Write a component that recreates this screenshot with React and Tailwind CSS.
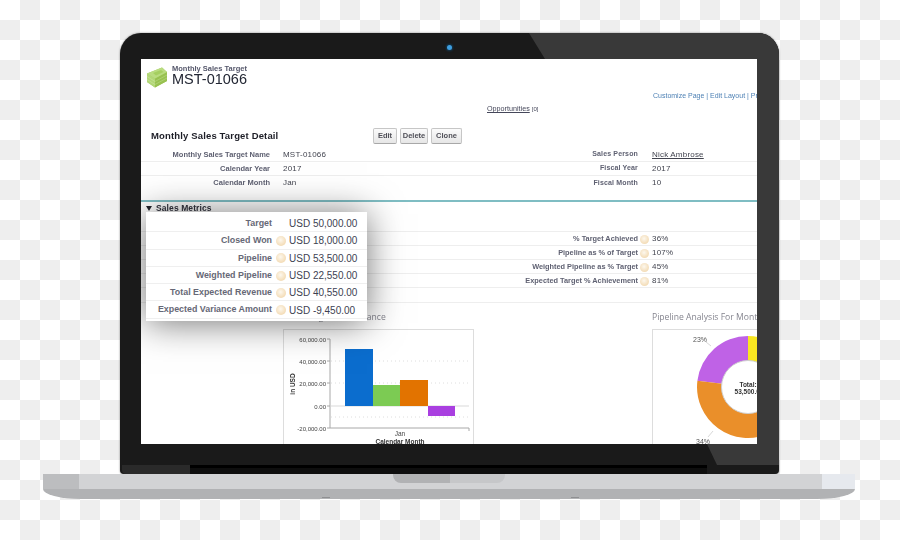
import React from 'react';

const detailRows = [
  ['Monthly Sales Target Name', 'MST-01066', 'Sales Person', 'Nick Ambrose'],
  ['Calendar Year', '2017', 'Fiscal Year', '2017'],
  ['Calendar Month', 'Jan', 'Fiscal Month', '10'],
];

const metricRows = [
  ['% Target Achieved', '36%'],
  ['Pipeline as % of Target', '107%'],
  ['Weighted Pipeline as % Target', '45%'],
  ['Expected Target % Achievement', '81%'],
  ['', ''],
];

const popoutRows = [
  ['Target', 'USD 50,000.00', false],
  ['Closed Won', 'USD 18,000.00', true],
  ['Pipeline', 'USD 53,500.00', true],
  ['Weighted Pipeline', 'USD 22,550.00', true],
  ['Total Expected Revenue', 'USD 40,550.00', true],
  ['Expected Variance Amount', 'USD -9,450.00', true],
];

export default function App() {
  return (
    <div className="w-[900px] h-[540px] overflow-hidden flex flex-col pt-[33px] font-['Liberation_Sans',Arial,sans-serif] bg-[repeating-conic-gradient(#eeeeee_0_25%,#ffffff_0_50%)] bg-[length:40px_40px]">
      <Lid />
      <Base />
    </div>
  );
}

function Lid() {
  return (
    <div className="relative shrink-0 ml-[120px] w-[659px] h-[441px] rounded-t-[21px] rounded-b-[4px] bg-[#1a1a1a] pt-[26px] pl-[21px] shadow-[0_0_2px_rgba(0,0,0,0.5)]">
      {/* lighter reflection over the right side of the bezel */}
      <div className="absolute inset-0 rounded-t-[21px] bg-[#393939] [clip-path:polygon(409px_0,100%_0,100%_432px,597px_432px,587px_411px,425px_26px)]" />
      <div className="absolute left-[2px] bottom-0 w-[68px] h-[9px] rounded-bl-[4px] bg-[#2a2a2a]" />
      <div className="absolute left-[70px] bottom-0 w-[517px] h-[9px] bg-[#0e0e0e] border-t-[3px] border-black" />
      <div className="absolute left-[327px] top-[12px] w-[5px] h-[5px] rounded-full bg-[#3f9fe0] shadow-[0_0_2px_1px_#123a55]" />
      <Screen />
    </div>
  );
}

function Screen() {
  return (
    <div className="relative w-[616px] h-[385px] overflow-hidden bg-white">
      <div className="blur-[0.35px]">
        <div className="h-[30px] flex pt-[6px] pl-[5px]">
          <MoneyIcon />
          <div className="ml-[4px] -mt-[1px]">
            <div className="text-[7.5px] leading-[9px] font-bold text-[#54566a]">Monthly Sales Target</div>
            <div className="text-[14.5px] leading-[13px] text-[#222633]">MST-01066</div>
          </div>
        </div>
        <div className="h-[12px] pl-[512px] text-[7px] leading-[14px] text-[#4f82b5] whitespace-nowrap">
          Customize Page | Edit Layout | Printable View
        </div>
        <div className="h-[13px] pl-[346px] text-[7.2px] leading-[15px] text-[#45475a] whitespace-nowrap">
          <span className="underline">Opportunities</span> <span className="text-[6px]">[0]</span>
        </div>
        <div className="mt-[14px] h-[16px] flex items-center pl-[10px]">
          <div className="w-[222px] text-[9.5px] font-bold tracking-[0.15px] text-[#1c1d26]">Monthly Sales Target Detail</div>
          <div className="flex gap-[3px]">
            <DetailButton className="w-[24px]">Edit</DetailButton>
            <DetailButton className="w-[28px]">Delete</DetailButton>
            <DetailButton className="w-[31px]">Clone</DetailButton>
          </div>
        </div>
        <div className="mt-[4px]">
          {detailRows.map((row, i) => (
            <div key={row[0]} className={`h-[14px] flex items-center ${i < 2 ? 'border-b border-[#eeeeee]' : ''}`}>
              <div className="w-[129px] text-right text-[7.5px] font-bold text-[#5f6172] whitespace-nowrap">{row[0]}</div>
              <div className="w-[239px] pl-[13px] text-[8px] tracking-[0.2px] text-[#42444f]">{row[1]}</div>
              <div className="w-[129px] text-right text-[7px] font-bold tracking-[0.15px] text-[#5f6172]">{row[2]}</div>
              <div className={`pl-[14px] text-[8px] tracking-[0.2px] text-[#42444f] ${i === 0 ? 'underline' : ''}`}>{row[3]}</div>
            </div>
          ))}
        </div>
        <div className="mt-[10px] h-[1.5px] bg-[#7fbdc3]" />
        <div className="h-[14px] flex items-center pl-[5px] text-[8.5px] font-bold tracking-[0.1px] text-[#33343f]">
          <span className="w-0 h-0 mr-[4px] border-x-[3.5px] border-x-transparent border-t-[5px] border-t-[#22232b]" />
          Sales Metrics
        </div>
        <div className="h-[16.5px] border-b border-[#eeeeee]" />
        {metricRows.map((row, i) => (
          <div key={i} className={`flex items-center justify-end pt-[1px] pr-[108px] border-b border-[#eeeeee] relative ${i === 4 ? 'h-[15px]' : 'h-[14px]'}`}>
            {row[0] && (
              <>
                <span className="text-[7.35px] font-bold text-[#5f6172] whitespace-nowrap">{row[0]}</span>
                <HelpDot className="w-[9px] h-[9px] ml-[2px]" />
                <span className="absolute left-[511px] text-[8px] tracking-[0.2px] text-[#42444f]">{row[1]}</span>
              </>
            )}
          </div>
        ))}
        <div className="mt-[8px] flex pl-[142px]">
          <SpendChart />
          <div className="ml-[178px]">
            <PipelineChart />
          </div>
        </div>
      </div>
      <Popout />
    </div>
  );
}

function DetailButton({ className, children }) {
  return (
    <div className={`h-[16px] flex items-center justify-center rounded-[2px] border border-[#c6c6c6] border-b-[#a8a8a8] bg-gradient-to-b from-[#fbfbfb] to-[#e6e6e6] text-[7.5px] font-bold text-[#4f4f57] ${className}`}>
      {children}
    </div>
  );
}

function HelpDot({ className }) {
  return (
    <span className={`inline-block shrink-0 rounded-full bg-[radial-gradient(circle_at_45%_40%,#fdf8ee,#efd09f)] ${className}`} />
  );
}

function Popout() {
  return (
    <div className="absolute left-[5px] top-[153px] w-[221px] h-[109px] pt-[3px] bg-white shadow-[0_2px_34px_rgba(0,0,0,0.55)]">
      {popoutRows.map(([label, value, help]) => (
        <div key={label} className="h-[17.3px] flex items-center pt-[1px] border-b border-[#efefef]">
          <div className="w-[126px] text-right text-[8.9px] font-bold text-[#666876] whitespace-nowrap">{label}</div>
          <div className="w-[17px] flex justify-center">
            {help && <HelpDot className="w-[10px] h-[10px]" />}
          </div>
          <div className="text-[10px] text-[#3d3f52] whitespace-nowrap">{value}</div>
        </div>
      ))}
    </div>
  );
}

function ChartTitle({ children }) {
  return (
    <div className="h-[12px] mb-[6px] text-[8.6px] leading-[12px] text-[#85858f] whitespace-nowrap font-['Open_Sans',sans-serif]">
      {children}
    </div>
  );
}

function SpendChart() {
  const ticks = [[339, '60,000.00'], [361, '40,000.00'], [383, '20,000.00'], [406, '0.00'], [428, '-20,000.00']];
  return (
    <div className="w-[191px]">
      <ChartTitle>Sales Target and Variance</ChartTitle>
      <div className="w-[191px] h-[120px] border border-[#dddddd] bg-white">
        <svg width="189" height="118" viewBox="284 330 189 118" className="block">
          {[361, 383, 417].map((y) => (
            <line key={y} x1="331" x2="468" y1={y} y2={y} stroke="#dedede" strokeDasharray="1 3" />
          ))}
          <line x1="331" x2="469" y1="406" y2="406" stroke="#e6e6e6" strokeWidth="1.5" />
          <rect x="345" y="349" width="28" height="57" fill="#0b6dce" />
          <rect x="373" y="385" width="27" height="21" fill="#7ccb53" />
          <rect x="400" y="380" width="28" height="26" fill="#e27300" />
          <rect x="428" y="406" width="27" height="10" fill="#a93fe0" />
          <path d="M330 339V428H469V431" fill="none" stroke="#a8a8a8" />
          {ticks.map(([y, label]) => (
            <g key={label}>
              <line x1="327" x2="330" y1={y} y2={y} stroke="#a8a8a8" />
              <text x="326" y={y + 2.5} textAnchor="end" fontSize="6" fill="#444444">{label}</text>
            </g>
          ))}
          <text transform="translate(295 384) rotate(-90)" textAnchor="middle" fontSize="6.5" fontWeight="bold" fill="#333333">in USD</text>
          <text x="400" y="436" textAnchor="middle" fontSize="6.5" fill="#444444">Jan</text>
          <text x="400" y="444" textAnchor="middle" fontSize="6.5" fontWeight="bold" fill="#333333">Calendar Month</text>
        </svg>
      </div>
    </div>
  );
}

function PipelineChart() {
  return (
    <div className="w-[200px]">
      <ChartTitle>Pipeline Analysis For Month</ChartTitle>
      <div className="w-[200px] h-[120px] border border-[#dddddd] bg-white">
        <svg width="198" height="118" viewBox="653 330 198 118" className="block">
          <path d="M748 336A51 51 0 0 0 697.4 380.8L722.2 383.8A26 26 0 0 1 748 361Z" fill="#bf62e6" />
          <path d="M697.4 380.8A51 51 0 0 0 769.6 433.2L759 410.6A26 26 0 0 1 722.2 383.8Z" fill="#ea8f2a" />
          <path d="M748 336A51 51 0 0 1 799 387H774A26 26 0 0 0 748 361Z" fill="#f9e721" />
          <circle cx="748" cy="387" r="26.5" fill="white" stroke="#cfcfcf" />
          <text x="748" y="387" textAnchor="middle" fontSize="6.5" fontWeight="bold" fill="#333333">Total:</text>
          <text x="749" y="394" textAnchor="middle" fontSize="6.5" fontWeight="bold" fill="#333333">53,500.00</text>
          <path d="M706 342L711 346" stroke="#d8d8d8" fill="none" />
          <path d="M708 437L713 431" stroke="#d8d8d8" fill="none" />
          <text x="700" y="342" textAnchor="middle" fontSize="7" fill="#555555">23%</text>
          <text x="703" y="444" textAnchor="middle" fontSize="7" fill="#555555">34%</text>
        </svg>
      </div>
    </div>
  );
}

function MoneyIcon() {
  return (
    <svg width="22" height="23" viewBox="0 0 22 23" className="shrink-0 mt-[1px]">
      <path d="M1 7.5L16 1.5L21 6V15L9 21.5L1 16Z" fill="#a3cc5e" />
      <path d="M1 7.5L9 12.5V21.5L1 16Z" fill="#b2d777" />
      <path d="M9 12.5L21 6V15L9 21.5Z" fill="#98c150" />
      <path d="M1 7.5L16 1.5L21 6L9 12.5Z" fill="#b9dc80" />
      <path d="M7 7L15 4L17.5 6L10 9.5Z" fill="#a5cf60" />
      <path d="M9 15.5L21 9M9 18.5L21 12" stroke="#b9da84" strokeWidth="0.6" fill="none" />
      <path d="M1 10.5L9 15.5M1 13.5L9 18.5" stroke="#cbe49d" strokeWidth="0.6" fill="none" />
    </svg>
  );
}

function Base() {
  return (
    <div className="relative shrink-0 ml-[43px] w-[812px] h-[25px] flex flex-col">
      <div className="h-[15px] flex bg-[#d2d3d5]">
        <div className="w-[36px] bg-[#bcbdbf]" />
        <div className="flex-1" />
        <div className="w-[33px] bg-[#e6e9ee]" />
      </div>
      <div className="h-[10px] bg-[#b1b2b4] rounded-bl-[38px_10px] rounded-br-[38px_10px]" />
      {/* hinge notch */}
      <div className="absolute left-[350px] top-0 w-[112px] h-[9px] flex overflow-hidden rounded-b-[8px]">
        <div className="w-[57px] bg-[#b1b2b4]" />
        <div className="flex-1 bg-[#c6c7c9]" />
      </div>
      <div className="absolute left-[279px] bottom-[1px] w-[8px] h-[1px] bg-[#8f9092]" />
      <div className="absolute left-[528px] bottom-[1px] w-[8px] h-[1px] bg-[#8f9092]" />
    </div>
  );
}
